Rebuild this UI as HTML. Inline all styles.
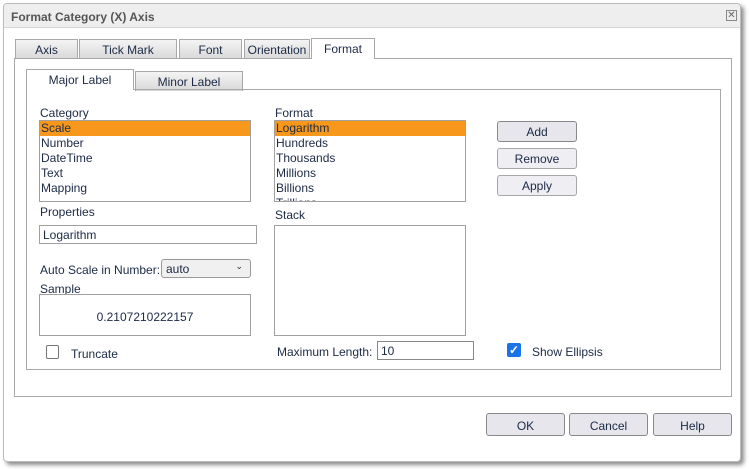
<!DOCTYPE html>
<html><head><style>
*{box-sizing:border-box;margin:0;padding:0}
body{width:749px;height:469px;background:#fff;font-family:"Liberation Sans",sans-serif;font-size:12px;color:#1b2a45;position:relative;overflow:hidden}
.a{position:absolute}
.dlg{left:3px;top:3px;width:738px;height:459px;border:1px solid #bcbcbc;border-radius:4px;background:#fff;box-shadow:3px 3px 4px rgba(0,0,0,.45)}
.title{left:0;top:0;width:736px;height:24px;background:#eeeeee;border-bottom:1px solid #d6d6d6;border-radius:4px 4px 0 0;font-weight:bold;color:#555;font-size:12px;padding:6px 0 0 7px}
.tab{height:20px;border:1px solid #a8a8a8;border-bottom:none;background:linear-gradient(#f4f4f4,#d8d8d8);text-align:center;padding-top:3px;font-size:12px}
.tab.on{background:#fff;height:21px}
.box{border:1px solid #a0a0a0;background:#fff}
.list div{height:15px;line-height:15px;padding-left:1px}
.sel{background:#f7981d}
.btn{border:1px solid #a6a6a6;border-radius:3px;background:#eeeef3;text-align:center;font-size:12px}
</style></head><body>
<div class="a dlg">
<div class="a title">Format Category (X) Axis</div>
<div class="a" style="left:722px;top:6px;width:11px;height:11px;border:1px solid #888;font-size:10px;line-height:9px;text-align:center;color:#666">✕</div>
</div>
<!-- outer tabs -->
<div class="a tab" style="left:15px;top:39px;width:63px">Axis</div>
<div class="a tab" style="left:79px;top:39px;width:98px">Tick Mark</div>
<div class="a tab" style="left:179px;top:39px;width:63px">Font</div>
<div class="a tab" style="left:244px;top:39px;width:66px">Orientation</div>
<div class="a" style="left:14px;top:58px;width:718px;height:339px;border:1px solid #a8a8a8"></div>
<div class="a tab on" style="left:311px;top:38px;width:64px;z-index:2">Format</div>
<!-- inner tabs -->
<div class="a tab" style="left:135px;top:71px;width:108px">Minor Label</div>
<div class="a" style="left:26px;top:89px;width:695px;height:281px;border:1px solid #a8a8a8"></div>
<div class="a tab on" style="left:26px;top:69px;width:108px;z-index:2">Major Label</div>

<div class="a" style="left:40px;top:106px">Category</div>
<div class="a box list" style="left:39px;top:120px;width:212px;height:82px">
<div class="sel">Scale</div><div>Number</div><div>DateTime</div><div>Text</div><div>Mapping</div></div>
<div class="a" style="left:40px;top:205px">Properties</div>
<div class="a box" style="left:39px;top:225px;width:218px;height:19px;padding:2px 3px">Logarithm</div>
<div class="a" style="left:40px;top:263px">Auto Scale in Number:</div>
<div class="a" style="left:161px;top:259px;width:90px;height:19px;border:1px solid #999;border-radius:3px;background:#f0f0f0;padding:2px 4px">auto<span style="position:absolute;right:7px;top:1px;font-size:9px">⌄</span></div>
<div class="a" style="left:40px;top:282px">Sample</div>
<div class="a box" style="left:39px;top:294px;width:212px;height:42px;text-align:center;padding-top:15px">0.2107210222157</div>
<div class="a" style="left:46px;top:345px;width:13px;height:14px;border:1px solid #777;border-radius:2px"></div>
<div class="a" style="left:71px;top:347px">Truncate</div>

<div class="a" style="left:275px;top:106px">Format</div>
<div class="a box list" style="left:274px;top:120px;width:192px;height:82px;overflow:hidden">
<div class="sel">Logarithm</div><div>Hundreds</div><div>Thousands</div><div>Millions</div><div>Billions</div><div>Trillions</div></div>
<div class="a" style="left:275px;top:208px">Stack</div>
<div class="a box" style="left:274px;top:225px;width:192px;height:111px"></div>
<div class="a" style="left:277px;top:345px">Maximum Length:</div>
<div class="a box" style="left:377px;top:341px;width:97px;height:19px;padding:2px 3px;border-color:#888">10</div>
<div class="a" style="left:507px;top:343px;width:14px;height:14px;background:#1a73e8;border-radius:2px;color:#fff;font-size:12px;line-height:14px;text-align:center;font-weight:bold">✓</div>
<div class="a" style="left:532px;top:345px">Show Ellipsis</div>

<div class="a btn" style="left:497px;top:121px;width:80px;height:21px;padding-top:3px;background:#e6e6ec;border-color:#888">Add</div>
<div class="a btn" style="left:497px;top:148px;width:80px;height:21px;padding-top:3px">Remove</div>
<div class="a btn" style="left:497px;top:175px;width:80px;height:21px;padding-top:3px">Apply</div>

<div class="a btn" style="left:486px;top:413px;width:79px;height:23px;padding-top:5px;background:#e6e6ec;border-color:#888">OK</div>
<div class="a btn" style="left:569px;top:413px;width:79px;height:23px;padding-top:5px;background:#e6e6ec;border-color:#888">Cancel</div>
<div class="a btn" style="left:653px;top:413px;width:79px;height:23px;padding-top:5px;background:#e6e6ec;border-color:#888">Help</div>
</body></html>
